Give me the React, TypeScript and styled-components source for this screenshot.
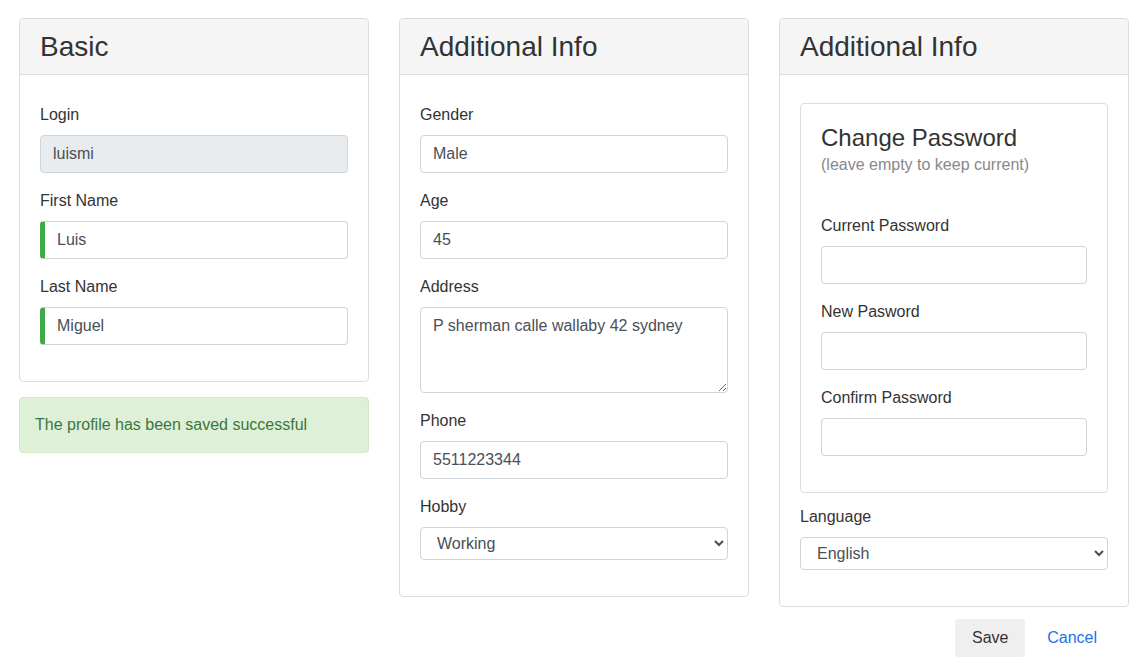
import React from "react";
import styled, { createGlobalStyle } from "styled-components";

const GlobalStyle = createGlobalStyle`
  * { box-sizing: border-box; }
  html, body { margin: 0; padding: 0; background: #fff; }
  body {
    font-family: "Liberation Sans", Arial, sans-serif;
    font-size: 16px;
    line-height: 1.5;
    color: #212529;
  }
`;

const Page = styled.div`
  padding: 18px 0 0 19px;
`;

const Columns = styled.div`
  display: grid;
  grid-template-columns: repeat(3, 350px);
  column-gap: 30px;
  align-items: start;
`;

const Column = styled.div`
  display: flex;
  flex-direction: column;
`;

const Panel = styled.section`
  border: 1px solid #ddd;
  border-radius: 4px;
  background: #fff;
`;

const PanelHeading = styled.header`
  background: #f5f5f5;
  border-bottom: 1px solid #ddd;
  border-radius: 3px 3px 0 0;
  height: 56px;
  padding: 0 20px;
  display: flex;
  align-items: center;
`;

const PanelTitle = styled.h3`
  margin: 0;
  font-size: 28px;
  font-weight: 400;
  line-height: 1.2;
  color: #333;
`;

const PanelBody = styled.div`
  padding: 28px 20px 20px;
`;

const Group = styled.div`
  margin-bottom: 16px;
`;

const Label = styled.label`
  display: block;
  margin-bottom: 8px;
  line-height: 24px;
  color: #333;
`;

const Input = styled.input<{ $valid?: boolean }>`
  display: block;
  width: 100%;
  height: 38px;
  padding: 6px 12px;
  font-family: inherit;
  font-size: 16px;
  line-height: 24px;
  color: #495057;
  background: #fff;
  border: 1px solid #ced4da;
  border-left: ${(p) => (p.$valid ? "5px solid #42a948" : "1px solid #ced4da")};
  border-radius: 4px;
  outline: none;
  &:disabled {
    background: #e9ecef;
    color: #495057;
    opacity: 1;
  }
`;

const TextArea = styled.textarea`
  display: block;
  width: 100%;
  height: 86px;
  padding: 6px 12px;
  font-family: inherit;
  font-size: 16px;
  line-height: 24px;
  color: #495057;
  border: 1px solid #ced4da;
  border-radius: 4px;
  resize: vertical;
  outline: none;
`;

const Select = styled.select`
  display: block;
  width: 100%;
  height: 33px;
  padding: 0 8px 0 12px;
  font-family: inherit;
  font-size: 16px;
  color: #495057;
  background: #fff;
  border: 1px solid #ced4da;
  border-radius: 4px;
  outline: none;
`;

const Alert = styled.div`
  margin-top: 15px;
  padding: 15px;
  line-height: 24px;
  background: #dff0d8;
  border: 1px solid #d6e9c6;
  border-radius: 4px;
  color: #3c763d;
`;

const Card = styled.div`
  border: 1px solid #ddd;
  border-radius: 4px;
  padding: 20px;
  margin-bottom: 12px;
`;

const CardTitle = styled.h4`
  margin: 0;
  font-size: 24px;
  font-weight: 400;
  line-height: 28px;
  color: #333;
`;

const CardHint = styled.div`
  color: #888;
  line-height: 24px;
  margin-top: 1px;
  margin-bottom: 37px;
`;

const Actions = styled.div`
  display: flex;
  justify-content: flex-end;
  align-items: center;
  gap: 10px;
  padding: 12px 20px 0 0;
`;

const Button = styled.button<{ $link?: boolean }>`
  height: 38px;
  padding: 0 12px;
  font-family: inherit;
  font-size: 16px;
  border: none;
  border-radius: 4px;
  cursor: pointer;
  background: ${(p) => (p.$link ? "transparent" : "#efefef")};
  color: ${(p) => (p.$link ? "#1a73e8" : "#333")};
  min-width: ${(p) => (p.$link ? "auto" : "70px")};
`;

export default function App() {
  return (
    <>
      <GlobalStyle />
      <Page>
        <Columns>
          <Column>
            <Panel>
              <PanelHeading>
                <PanelTitle>Basic</PanelTitle>
              </PanelHeading>
              <PanelBody>
                <Group>
                  <Label>Login</Label>
                  <Input value="luismi" disabled readOnly />
                </Group>
                <Group>
                  <Label>First Name</Label>
                  <Input $valid value="Luis" readOnly />
                </Group>
                <Group>
                  <Label>Last Name</Label>
                  <Input $valid value="Miguel" readOnly />
                </Group>
              </PanelBody>
            </Panel>
            <Alert>The profile has been saved successful</Alert>
          </Column>

          <Column>
            <Panel>
              <PanelHeading>
                <PanelTitle>Additional Info</PanelTitle>
              </PanelHeading>
              <PanelBody>
                <Group>
                  <Label>Gender</Label>
                  <Input value="Male" readOnly />
                </Group>
                <Group>
                  <Label>Age</Label>
                  <Input value="45" readOnly />
                </Group>
                <Group>
                  <Label>Address</Label>
                  <TextArea value="P sherman calle wallaby 42 sydney" readOnly />
                </Group>
                <Group>
                  <Label>Phone</Label>
                  <Input value="5511223344" readOnly />
                </Group>
                <Group>
                  <Label>Hobby</Label>
                  <Select defaultValue="Working">
                    <option>Working</option>
                    <option>Reading</option>
                  </Select>
                </Group>
              </PanelBody>
            </Panel>
          </Column>

          <Column>
            <Panel>
              <PanelHeading>
                <PanelTitle>Additional Info</PanelTitle>
              </PanelHeading>
              <PanelBody>
                <Card>
                  <CardTitle>Change Password</CardTitle>
                  <CardHint>(leave empty to keep current)</CardHint>
                  <Group>
                    <Label>Current Password</Label>
                    <Input type="password" readOnly />
                  </Group>
                  <Group>
                    <Label>New Pasword</Label>
                    <Input type="password" readOnly />
                  </Group>
                  <Group>
                    <Label>Confirm Password</Label>
                    <Input type="password" readOnly />
                  </Group>
                </Card>
                <Group>
                  <Label>Language</Label>
                  <Select defaultValue="English">
                    <option>English</option>
                    <option>Spanish</option>
                  </Select>
                </Group>
              </PanelBody>
            </Panel>
            <Actions>
              <Button>Save</Button>
              <Button $link>Cancel</Button>
            </Actions>
          </Column>
        </Columns>
      </Page>
    </>
  );
}
